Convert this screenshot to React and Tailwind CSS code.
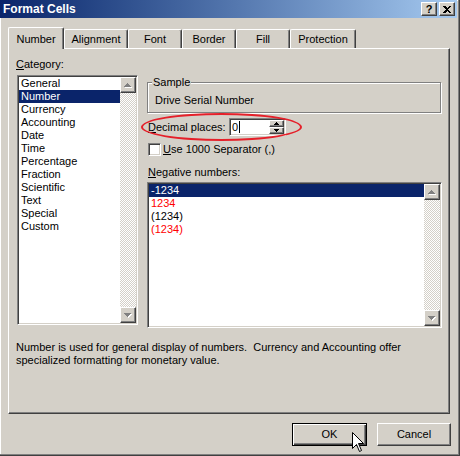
import React from "react";

const raised =
  "bg-[#d4d0c8] border border-t-white border-l-white border-r-[#404040] border-b-[#404040] shadow-[inset_-1px_-1px_0_#808080]";
const sunken =
  "bg-white border border-t-[#808080] border-l-[#808080] border-r-white border-b-white shadow-[inset_1px_1px_0_#404040,inset_-1px_-1px_0_#d4d0c8]";

function Tri({ dir = "up", disabled = false, w = 7, h = 4 }) {
  const pts = dir === "up" ? `${w / 2},0 ${w},${h} 0,${h}` : `0,0 ${w},0 ${w / 2},${h}`;
  return (
    <svg width={w + 1} height={h + 1} viewBox={`0 0 ${w + 1} ${h + 1}`} className="block" shapeRendering="crispEdges">
      {disabled && <polygon points={pts} transform="translate(1,1)" fill="#ffffff" />}
      <polygon points={pts} fill={disabled ? "#808080" : "#000000"} />
    </svg>
  );
}

function ScrollBar() {
  return (
    <div className="w-[16px] h-full flex flex-col">
      <div className={`${raised} h-[16px] w-[16px] flex items-center justify-center`}>
        <Tri dir="up" disabled />
      </div>
      <div className="flex-1 bg-[image:repeating-conic-gradient(#ffffff_0%_25%,#d4d0c8_0%_50%)] bg-[length:2px_2px]" />
      <div className={`${raised} h-[16px] w-[16px] flex items-center justify-center`}>
        <Tri dir="down" disabled />
      </div>
    </div>
  );
}

function ListBox({ items, selected, className }) {
  return (
    <div className={`${sunken} p-px flex ${className}`}>
      <div className="flex-1 flex flex-col">
        {items.map((it, i) => (
          <div
            key={i}
            className={`h-[13px] leading-[13px] pl-[2px] whitespace-nowrap ${
              i === selected ? "bg-[#0a246a] text-white" : it.red ? "text-[#ff0000]" : "text-black"
            }`}
          >
            {it.label}
          </div>
        ))}
      </div>
      <ScrollBar />
    </div>
  );
}

const categories = [
  "General",
  "Number",
  "Currency",
  "Accounting",
  "Date",
  "Time",
  "Percentage",
  "Fraction",
  "Scientific",
  "Text",
  "Special",
  "Custom",
].map((label) => ({ label }));

const negatives = [
  { label: "-1234" },
  { label: "1234", red: true },
  { label: "(1234)" },
  { label: "(1234)", red: true },
];

const tabs = [
  { label: "Number", w: "w-[56px]", selected: true },
  { label: "Alignment", w: "w-[64px]" },
  { label: "Font", w: "w-[54px]" },
  { label: "Border", w: "w-[54px]" },
  { label: "Fill", w: "w-[54px]" },
  { label: "Protection", w: "w-[66px]" },
];

export default function App() {
  return (
    <div className="relative w-[460px] h-[456px] overflow-hidden bg-[#d4d0c8] font-['Liberation_Sans',Arial,sans-serif] text-[11px] leading-[13px] text-black shadow-[inset_-1px_-1px_0_#404040,inset_-2px_-2px_0_#808080,inset_1px_1px_0_#ffffff]">
      {/* Title bar */}
      <div className="mr-[3px] h-[18px] flex items-center justify-between bg-linear-to-r from-[#0a246a] to-[#a6caf0] pl-[3px] pr-[2px]">
        <span className="text-white font-bold text-[12px] leading-[14px]">Format Cells</span>
        <div className="flex gap-[2px]">
          <div className={`${raised} w-[16px] h-[14px] flex items-center justify-center`}>
            <span className="font-bold text-[11px] leading-[11px] text-black">?</span>
          </div>
          <div className={`${raised} w-[16px] h-[14px] flex items-center justify-center`}>
            <svg width="8" height="7" viewBox="0 0 8 7" shapeRendering="crispEdges">
              <path d="M0 0h2l2 2 2-2h2L5 3.5 8 7H6L4 5 2 7H0l3-3.5z" fill="#000" />
            </svg>
          </div>
        </div>
      </div>

      {/* Tabs */}
      <div className="ml-[8px] mt-[9px] h-[21px] flex items-end">
        {tabs.map((t) => (
          <div
            key={t.label}
            className={`${t.w} ${
              t.selected ? "h-[22px] -mb-px relative z-10" : "h-[19px]"
            } bg-[#d4d0c8] rounded-t-[2px] border-l border-t border-white border-r border-r-[#404040] shadow-[inset_-1px_0_0_#808080] flex items-center justify-center pt-px`}
          >
            {t.label}
          </div>
        ))}
      </div>

      {/* Panel */}
      <div className="ml-[8px] w-[442px] h-[366px] border-t border-l border-white border-r border-b border-r-[#404040] border-b-[#404040] shadow-[inset_-1px_-1px_0_#808080] pl-[7px] pt-[9px]">
        <div className="flex gap-[9px]">
          {/* Left column */}
          <div className="w-[122px] flex flex-col">
            <div className="h-[13px]">
              <u>C</u>ategory:
            </div>
            <ListBox items={categories} selected={1} className="mt-[4px] ml-px w-[121px] h-[250px]" />
          </div>

          {/* Right column */}
          <div className="w-[295px] flex flex-col">
            <div className="relative mt-[24px] w-[294px] h-[31px] border border-[#808080] shadow-[1px_1px_0_#ffffff,inset_1px_1px_0_#ffffff] pl-[7px] pt-[11px]">
              <span className="absolute left-[4px] -top-[7px] bg-[#d4d0c8] px-px">Sample</span>
              <div>Drive Serial Number</div>
            </div>

            <div className="relative mt-[5px] h-[18px] flex items-center">
              <div className="w-[82px] pl-px">
                <u>D</u>ecimal places:
              </div>
              <div className={`${sunken} p-px w-[57px] h-[18px] flex`}>
                <div className="flex-1 flex items-center pl-[1px]">
                  <span>0</span>
                  <span className="ml-[1px] w-px h-[12px] bg-black" />
                </div>
                <div className="w-[15px] flex flex-col">
                  <div className={`${raised} h-[7px] flex items-center justify-center`}>
                    <Tri dir="up" w={5} h={3} />
                  </div>
                  <div className={`${raised} h-[7px] flex items-center justify-center`}>
                    <Tri dir="down" w={5} h={3} />
                  </div>
                </div>
              </div>
              <div className="absolute -left-[6px] -top-[5px] w-[161px] h-[28px] rounded-[50%] border-2 border-[#e5202a]" />
            </div>

            <div className="mt-[7px] h-[13px] flex items-center">
              <div className={`${sunken} ml-px w-[13px] h-[13px]`} />
              <span className="ml-[2px]">
                <u>U</u>se 1000 Separator (,)
              </span>
            </div>

            <div className="mt-[10px] h-[13px] pl-px">
              <u>N</u>egative numbers:
            </div>
            <ListBox items={negatives} selected={0} className="mt-[3px] w-[295px] h-[146px]" />
          </div>
        </div>

        <div className="mt-[13px]">
          <div>Number is used for general display of numbers.&nbsp; Currency and Accounting offer</div>
          <div>specialized formatting for monetary value.</div>
        </div>
      </div>

      {/* Buttons */}
      <div className="mt-[9px] flex justify-end gap-[10px] pr-[9px]">
        <div className="w-[75px] h-[23px] bg-[#d4d0c8] border border-black shadow-[inset_1px_1px_0_#ffffff,inset_-1px_-1px_0_#404040,inset_-2px_-2px_0_#808080] flex items-center justify-center">
          OK
        </div>
        <div className={`${raised} w-[74px] h-[23px] flex items-center justify-center`}>Cancel</div>
      </div>

      {/* Mouse cursor */}
      <svg className="absolute left-[352px] top-[432px]" width="13" height="21" viewBox="0 0 13 21">
        <path d="M0.5 0.5V16.5L4.5 12.5L7.5 19.5L9.5 18.5L6.5 11.5H11.5Z" fill="#ffffff" stroke="#000000" strokeWidth="1" />
      </svg>
    </div>
  );
}
